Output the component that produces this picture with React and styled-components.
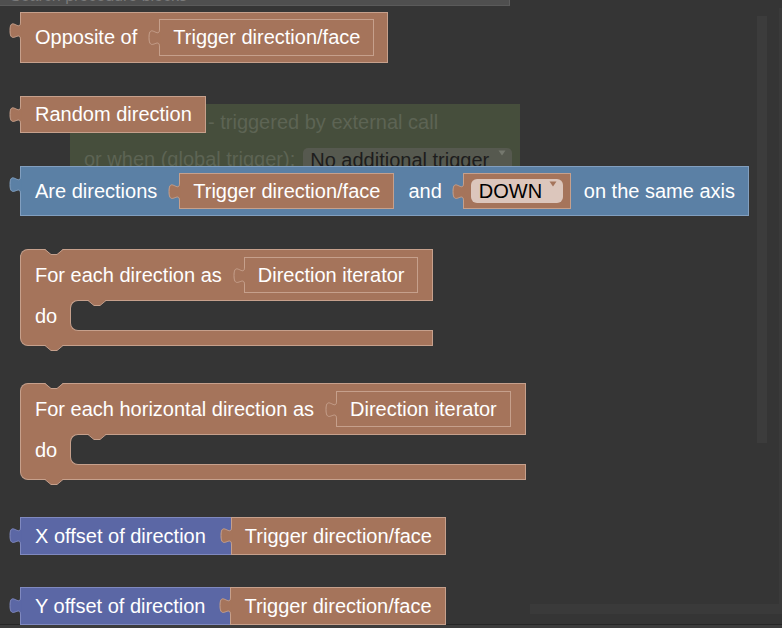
import React from "react";
import styled, { createGlobalStyle } from "styled-components";

const BG = "#353535";
const BROWN = "#a5745b";
const BROWN_LINE = "#c6a08c";
const BLUE = "#5b80a5";
const BLUE_LINE = "#829fbf";
const INDIGO = "#5b67a5";
const INDIGO_LINE = "#8089bf";

const GlobalStyle = createGlobalStyle`
  html, body {
    margin: 0;
    background: ${BG};
  }
  body {
    font-family: "Liberation Sans", Arial, sans-serif;
  }
`;

const Frame = styled.div`
  position: relative;
  width: 782px;
  height: 628px;
  overflow: hidden;
  background: ${BG};
`;

const SearchBar = styled.div`
  width: 510px;
  height: 6px;
  box-sizing: border-box;
  overflow: hidden;
  background: #4f4f4f;
  border-right: 1px solid #5e5e5e;
  border-bottom: 1px solid #5a5a5a;
`;

const SearchText = styled.div`
  margin-top: -12px;
  padding-left: 10px;
  font-size: 16px;
  line-height: 16px;
  color: #7a7a7a;
  white-space: nowrap;
`;

/* workspace block lying behind the flyout */
const Ghost = styled.div`
  position: absolute;
  left: 70px;
  top: 104px;
  width: 450px;
  height: 80px;
  background: #464e3c;
  color: #5d6454;
  font-size: 20px;
  &::before {
    content: "";
    position: absolute;
    left: 12px;
    top: -16px;
    width: 120px;
    height: 32px;
    border-radius: 50% 50% 0 0 / 100% 100% 0 0;
    background: #3e4438;
    z-index: -1;
  }
`;

const GhostRow = styled.div`
  display: flex;
  align-items: center;
  height: 37px;
  padding-left: ${(p) => p.$indent || 14}px;
  white-space: nowrap;
`;

const GhostSelect = styled.div`
  display: flex;
  align-items: flex-start;
  width: 209px;
  height: 24px;
  box-sizing: border-box;
  margin-left: 8px;
  padding: 0 6px 0 7px;
  border-radius: 5px;
  background: #56594f;
  color: #1d1d1d;
  line-height: 24px;
`;

const Flyout = styled.div`
  position: relative;
  z-index: 1;
  display: flex;
  flex-direction: column;
  padding: 6px 0 0 20px;
`;

const Block = styled.div`
  position: relative;
  display: flex;
  align-items: center;
  align-self: flex-start;
  flex-shrink: 0;
  box-sizing: border-box;
  height: ${(p) => p.$h || 37}px;
  margin-top: ${(p) => p.$mt || 0}px;
  padding: 0 ${(p) => (p.$open ? 0 : 13)}px 0 14px;
  background: ${(p) => p.$fill};
  border: 1px solid ${(p) => p.$line};
  border-right: ${(p) => (p.$open ? "none" : `1px solid ${p.$line}`)};
  color: #fff;
  font-size: 20px;
  white-space: nowrap;
`;

const Input = styled(Block)`
  align-self: center;
  height: ${(p) => p.$h || 36}px;
  margin: 0 0 0 ${(p) => p.$ml || 22}px;
  padding: 0 ${(p) => p.$px ?? 13}px;
  border-right: 1px solid ${(p) => p.$line};
`;

const Label = styled.span`
  margin-left: ${(p) => p.$ml || 0}px;
`;

const TabSvg = styled.svg`
  position: absolute;
  left: -12px;
  top: 5px;
  display: block;
  overflow: visible;
`;

const Tab = ({ fill, line }) => (
  <TabSvg width="12" height="22" viewBox="0 0 12 22">
    <path
      d="M11.5 0 V4 C11.5 15 1 -3 1 12.5 S11.5 11 11.5 22 H12.5 V0 Z"
      fill={fill}
    />
    <path
      d="M11.5 0 V4 C11.5 15 1 -3 1 12.5 S11.5 11 11.5 22"
      fill="none"
      stroke={line}
      strokeWidth="1"
    />
  </TabSvg>
);

const Pill = styled.div`
  display: flex;
  align-items: flex-start;
  width: 92px;
  height: 24px;
  box-sizing: border-box;
  padding: 0 6px 0 8px;
  border-radius: 6px;
  background: #dcc6bc;
  color: #000;
  line-height: 24px;
`;

const CaretSvg = styled.svg`
  margin: 2px 0 0 auto;
  flex-shrink: 0;
`;

const Caret = ({ color }) => (
  <CaretSvg width="8" height="6" viewBox="0 0 8 6">
    <path d="M0.5 0.5 H7.5 L4 5.5 Z" fill={color} />
  </CaretSvg>
);

/* statement block with a "do" mouth */
const CBlock = styled.div`
  display: inline-flex;
  flex-direction: column;
  align-self: flex-start;
  margin-top: ${(p) => p.$mt || 0}px;
  color: #fff;
  font-size: 20px;
  white-space: nowrap;
`;

const Head = styled.div`
  position: relative;
  display: flex;
  align-items: center;
  box-sizing: border-box;
  height: 51px;
  padding: 0 14px 0 14px;
  background: ${BROWN};
  border: 1px solid ${BROWN_LINE};
  border-bottom: none;
  border-radius: 8px 0 0 0;
`;

const Middle = styled.div`
  display: flex;
  height: 31px;
  background: ${BROWN};
  border-left: 1px solid ${BROWN_LINE};
`;

const Spine = styled.div`
  display: flex;
  align-items: center;
  box-sizing: border-box;
  width: 49px;
  padding: 2px 0 0 14px;
`;

const Mouth = styled.div`
  position: relative;
  flex: 1;
  background: ${BG};
  border: 1px solid ${BROWN_LINE};
  border-right: none;
  border-radius: 8px 0 0 8px;
`;

const Foot = styled.div`
  position: relative;
  box-sizing: border-box;
  height: 15px;
  background: ${BROWN};
  border: 1px solid ${BROWN_LINE};
  border-top: none;
  border-radius: 0 0 0 8px;
`;

const NotchSvg = styled.svg`
  position: absolute;
  left: ${(p) => p.$left}px;
  top: ${(p) => p.$top};
  display: block;
`;

const Notch = ({ fill, left, top = "-1px" }) => (
  <NotchSvg $left={left} $top={top} width="18" height="7" viewBox="0 0 18 7">
    <path d="M0 0 H18 L12 5.5 H6 Z" fill={fill} />
    <path d="M0 0.5 L6 5.5 H12 L18 0.5" fill="none" stroke={BROWN_LINE} />
  </NotchSvg>
);

const VScroll = styled.div`
  position: absolute;
  left: 757px;
  top: 16px;
  width: 10px;
  height: 427px;
  background: #3c3c3c;
`;

const HScroll = styled.div`
  position: absolute;
  left: 530px;
  top: 604px;
  width: 252px;
  height: 10px;
  background: #3a3a3a;
`;

const EdgeRight = styled.div`
  position: absolute;
  right: 0;
  top: 8px;
  width: 3px;
  height: 596px;
  background: #3a3a3a;
`;

const EdgeBottom = styled.div`
  position: absolute;
  left: 0;
  bottom: 0;
  width: 100%;
  height: 4px;
  box-sizing: border-box;
  background: #3c3c3c;
  border-top: 1px solid #262626;
`;

const BrownInput = ({ children, ml, px, h }) => (
  <Input $fill={BROWN} $line={BROWN_LINE} $ml={ml} $px={px} $h={h}>
    <Tab fill={BROWN} line={BROWN_LINE} />
    {children}
  </Input>
);

const ForEach = ({ label, mt }) => (
  <CBlock $mt={mt}>
    <Head>
      <Notch fill={BG} left={24} />
      {label}
      <BrownInput ml={22}>Direction iterator</BrownInput>
    </Head>
    <Middle>
      <Spine>do</Spine>
      <Mouth>
        <Notch fill={BROWN} left={17} />
      </Mouth>
    </Middle>
    <Foot>
      <Notch fill={BROWN} left={24} top="100%" />
    </Foot>
  </CBlock>
);

const OffsetBlock = ({ label, mt }) => (
  <Block $fill={INDIGO} $line={INDIGO_LINE} $h={38} $mt={mt} $open>
    <Tab fill={INDIGO} line={INDIGO_LINE} />
    {label}
    <BrownInput ml={25} h={38}>
      Trigger direction/face
    </BrownInput>
  </Block>
);

export default function App() {
  return (
    <Frame>
      <GlobalStyle />
      <SearchBar>
        <SearchText>Search procedure blocks</SearchText>
      </SearchBar>

      <Ghost>
        <GhostRow $indent={138}>- triggered by external call</GhostRow>
        <GhostRow>
          or when (global trigger):
          <GhostSelect>
            No additional trigger
            <Caret color="#75786e" />
          </GhostSelect>
        </GhostRow>
      </Ghost>

      <Flyout>
        <Block $fill={BROWN} $line={BROWN_LINE} $h={51}>
          <Tab fill={BROWN} line={BROWN_LINE} />
          Opposite of
          <BrownInput ml={22} h={37}>
            Trigger direction/face
          </BrownInput>
        </Block>

        <Block $fill={BROWN} $line={BROWN_LINE} $mt={33}>
          <Tab fill={BROWN} line={BROWN_LINE} />
          Random direction
        </Block>

        <Block $fill={BLUE} $line={BLUE_LINE} $h={50} $mt={33}>
          <Tab fill={BLUE} line={BLUE_LINE} />
          Are directions
          <BrownInput ml={22}>Trigger direction/face</BrownInput>
          <Label $ml={14}>and</Label>
          <BrownInput ml={21} px={7}>
            <Pill>
              DOWN
              <Caret color={BROWN} />
            </Pill>
          </BrownInput>
          <Label $ml={13}>on the same axis</Label>
        </Block>

        <ForEach label="For each direction as" mt={33} />
        <ForEach label="For each horizontal direction as" mt={37} />

        <OffsetBlock label="X offset of direction" mt={37} />
        <OffsetBlock label="Y offset of direction" mt={32} />
      </Flyout>

      <VScroll />
      <HScroll />
      <EdgeRight />
      <EdgeBottom />
    </Frame>
  );
}
